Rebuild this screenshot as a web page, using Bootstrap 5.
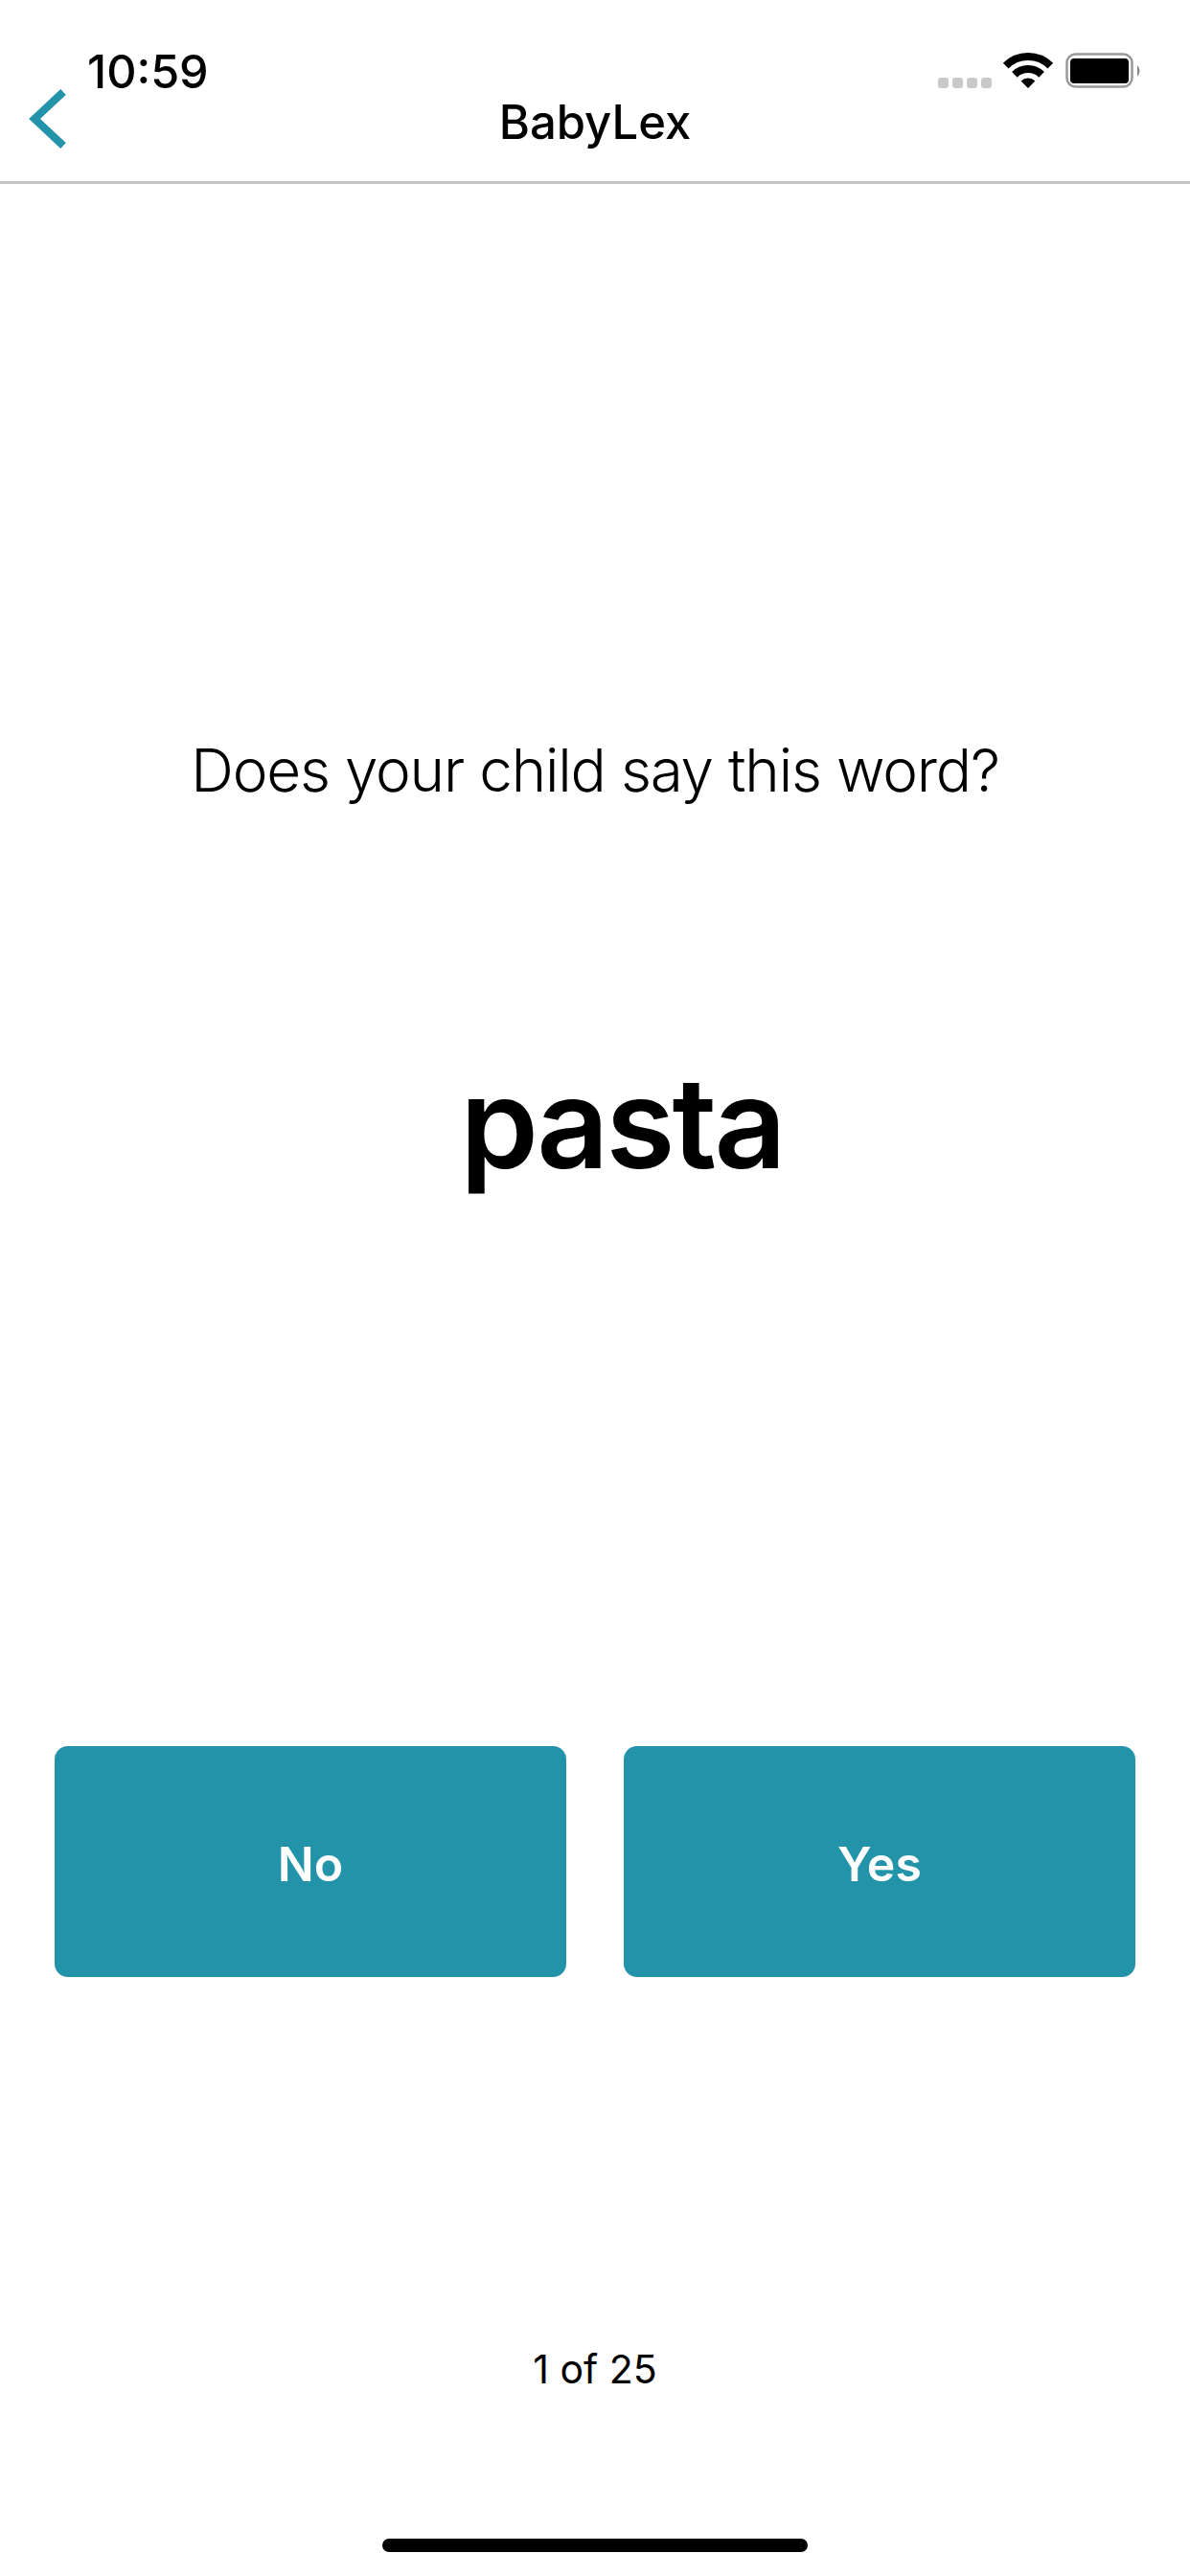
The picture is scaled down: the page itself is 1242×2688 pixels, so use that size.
<!DOCTYPE html>
<html lang="en">
<head>
    <meta charset="UTF-8">
    <meta name="viewport" content="width=device-width, initial-scale=1.0">
    <title>BabyLex</title>
    <link href="https://cdn.jsdelivr.net/npm/bootstrap@5.3.0/dist/css/bootstrap.min.css" rel="stylesheet">
    <style>
        body {
            font-family: Inter, "Liberation Sans", sans-serif;
            background: #fff;
            color: #000;
        }
        .screen {
            width: 1242px;
            height: 2688px;
            overflow: hidden;
        }
        .app-header {
            height: 192px;
            border-bottom: 3px solid #c4c4c4;
        }
        .status-time {
            position: absolute;
            left: 91px;
            top: 44px;
            font-size: 48.5px;
            line-height: 62px;
            font-weight: 500;
        }
        .status-icons {
            position: absolute;
            left: 979px;
            top: 52px;
        }
        .back-btn {
            position: absolute;
            left: 26px;
            top: 90px;
            line-height: 0;
            padding: 0;
            border: 0;
        }
        .app-title {
            font-size: 49px;
            line-height: 60px;
            font-weight: 450;
            padding-top: 98px;
        }
        .question {
            font-size: 62px;
            line-height: 80px;
            font-weight: 300;
            letter-spacing: -1.2px;
            margin-top: 572px;
        }
        .word {
            font-size: 131px;
            line-height: 150px;
            font-weight: 600;
            letter-spacing: -3px;
            margin-top: 253px;
            padding-left: 56px;
        }
        .answers {
            margin-top: 575px;
            padding: 0 57px;
            gap: 60px;
        }
        .answer-btn {
            width: 534px;
            height: 241px;
            padding: 6px 0 0;
            background: #2293a9;
            border: 0;
            border-radius: 14px;
            color: #fff;
            font-size: 50px;
            font-weight: 600;
        }
        .progress-label {
            font-size: 41px;
            line-height: 50px;
            margin-top: 384px;
        }
        .home-bar {
            width: 444px;
            height: 14px;
            background: #000;
            border-radius: 7px;
            position: absolute;
            left: 399px;
            top: 2649px;
        }
    </style>
</head>
<body>
    <div class="screen position-relative d-flex flex-column">
        <div class="status-time">10:59</div>
        <svg class="status-icons" width="220" height="50" viewBox="0 0 220 50">
            <rect x="0" y="29" width="11" height="11" rx="3" fill="#c9c9c9"/>
            <rect x="15" y="29" width="11" height="11" rx="3" fill="#c9c9c9"/>
            <rect x="30" y="29" width="11" height="11" rx="3" fill="#c9c9c9"/>
            <rect x="45" y="29" width="11" height="11" rx="3" fill="#c9c9c9"/>
            <path d="M70.7 16.7 A33 33 0 0 1 117.3 16.7" fill="none" stroke="#000" stroke-width="8"/>
            <path d="M79.9 25.9 A20 20 0 0 1 108.1 25.9" fill="none" stroke="#000" stroke-width="8"/>
            <path d="M94 40 L86.6 32.6 A10.5 10.5 0 0 1 101.4 32.6 Z" fill="#000"/>
            <rect x="134.5" y="4.5" width="68" height="34" rx="9" fill="none" stroke="#999" stroke-width="2.5"/>
            <rect x="138" y="9" width="61" height="26" rx="4" fill="#000"/>
            <path d="M208 16 Q213 22 208 28Z" fill="#888"/>
        </svg>

        <header class="app-header text-center">
            <button class="back-btn btn" type="button" aria-label="Back">
                <svg width="46" height="68" viewBox="0 0 46 68">
                    <path d="M40 6 L10 34 L40 62" fill="none" stroke="#2293a9" stroke-width="8"/>
                </svg>
            </button>
            <div class="app-title">BabyLex</div>
        </header>

        <main class="d-flex flex-column text-center">
            <div class="question">Does your child say this word?</div>
            <div class="word">pasta</div>
            <div class="answers d-flex">
                <button class="answer-btn btn" type="button">No</button>
                <button class="answer-btn btn" type="button">Yes</button>
            </div>
            <div class="progress-label">1 of 25</div>
        </main>

        <div class="home-bar"></div>
    </div>
    <script src="https://cdn.jsdelivr.net/npm/bootstrap@5.3.0/dist/js/bootstrap.bundle.min.js"></script>
</body>
</html>
